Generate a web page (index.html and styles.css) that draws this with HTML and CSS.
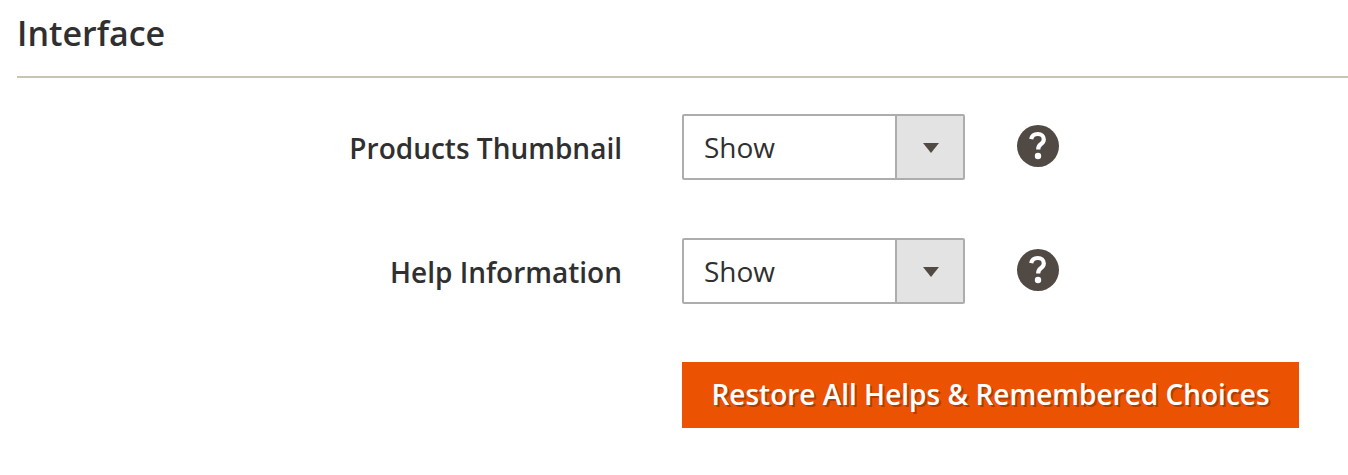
FILE: index.html
```html
<!DOCTYPE html>
<html lang="en">
<head>
<meta charset="utf-8">
<title>Interface</title>
<link rel="stylesheet" href="styles.css">
</head>
<body>
<section class="panel">
  <h2 class="title">Interface</h2>
  <div class="form">
    <div class="row">
      <label class="label">Products Thumbnail</label>
      <div class="select"><span class="value">Show</span><span class="arrow"><span class="tri"></span></span></div>
      <svg class="help" viewBox="0 0 42 42" aria-label="Help"><circle cx="21" cy="21" r="21" class="help-disc"/><path d="M14.200 14.200c.6-3.400 3.200-5.200 6.600-5.200 3.700 0 6 2.100 6 5.300 0 2.500-1.300 3.800-3 5-1.900 1.300-2.600 2.300-2.600 5.200" class="help-hook"/><circle cx="21" cy="31" r="3.200" class="help-dot"/></svg>
    </div>
    <div class="row">
      <label class="label">Help Information</label>
      <div class="select"><span class="value">Show</span><span class="arrow"><span class="tri"></span></span></div>
      <svg class="help" viewBox="0 0 42 42" aria-label="Help"><circle cx="21" cy="21" r="21" class="help-disc"/><path d="M14.200 14.200c.6-3.400 3.200-5.200 6.600-5.200 3.700 0 6 2.100 6 5.300 0 2.500-1.300 3.800-3 5-1.900 1.300-2.600 2.300-2.600 5.200" class="help-hook"/><circle cx="21" cy="31" r="3.200" class="help-dot"/></svg>
    </div>
    <div class="row">
      <span class="label"></span>
      <button class="restore">Restore All Helps &amp; Remembered Choices</button>
    </div>
  </div>
</section>
</body>
</html>
```
FILE: styles.css
```css
* { box-sizing: border-box; }
html, body { margin: 0; padding: 0; background: #fff; }
body { font-family: "Open Sans", sans-serif; color: #303030; overflow: hidden; height: 475px; }
.panel { padding-left: 17px; }
.title {
  margin: 0;
  height: 78px;
  padding-top: 11px;
  font-size: 34px;
  line-height: 44px;
  font-weight: 600;
  color: #303030;
  border-bottom: 2px solid #cac3b4;
}
.form { display: flex; flex-direction: column; gap: 58px; padding-top: 36px; }
.row { display: flex; align-items: center; }
.label {
  width: 605px;
  flex: none;
  padding-top: 2px;
  text-align: right;
  font-size: 28px;
  font-weight: 600;
  color: #303030;
}
.select {
  margin-left: 60px;
  width: 283px;
  height: 66px;
  display: flex;
  border: 2px solid #adadad;
  border-radius: 2px;
  background: #fff;
}
.value { flex: 1; padding-left: 20px; font-size: 28px; line-height: 62px; color: #303030; }
.arrow {
  width: 68px;
  display: flex;
  align-items: center;
  justify-content: center;
  padding: 2px 0 0 2px;
  background: #e3e3e3;
  border-left: 2px solid #adadad;
}
.tri {
  width: 0;
  height: 0;
  border-left: 8px solid transparent;
  border-right: 8px solid transparent;
  border-top: 10px solid #514943;
}
.help {
  margin-left: 52px;
  margin-bottom: 2px;
  width: 42px;
  height: 42px;
}
.help-disc { fill: #514943; }
.help-hook { fill: none; stroke: #fff; stroke-width: 4.200; }
.help-dot { fill: #fff; }
.restore {
  margin-left: 60px;
  width: 617px;
  height: 66px;
  border: 0;
  border-radius: 0;
  background: #eb5202;
  color: #fff;
  font-family: inherit;
  font-size: 28px;
  font-weight: 600;
  text-shadow: 2px 2px 0 rgba(0, 0, 0, .25);
  padding: 0 0 2px;
}
```
